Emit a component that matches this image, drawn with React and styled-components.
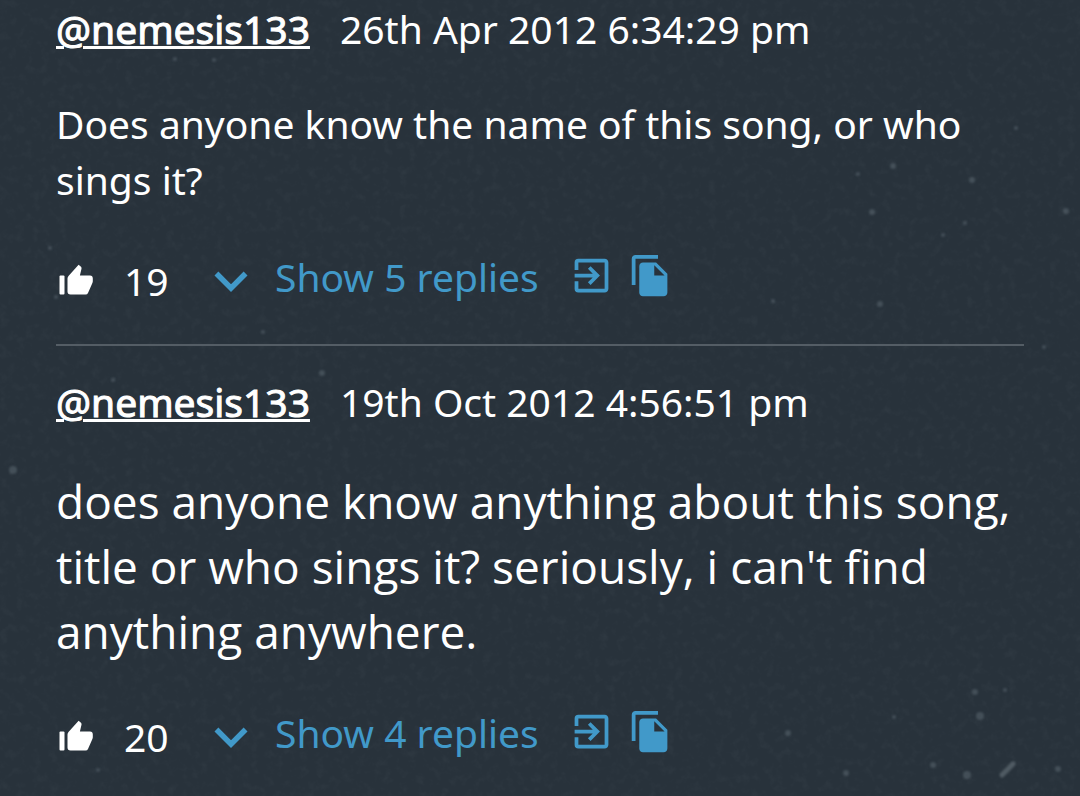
import React from 'react'
import styled, { createGlobalStyle } from 'styled-components'
import { MdExitToApp, MdExpandMore, MdFileCopy } from 'react-icons/md'

const GlobalStyle = createGlobalStyle`
  body {
    margin: 0;
    background-color: #28323b;
    color: #ffffff;
    font-family: 'Noto Sans', 'Open Sans', sans-serif;
    font-size: 39px;
  }
`

const Page = styled.main`
  position: relative;
  min-height: 100vh;
  box-sizing: border-box;
  overflow: hidden;
  padding: 1px 56px 0;
`

const Texture = styled.svg`
  position: absolute;
  inset: 0;
  width: 100%;
  height: 100%;
  z-index: -1;
`

const Comment = styled.article`
  & + & {
    border-top: 2px solid #545d65;
    padding-top: 28px;
  }
`

const Header = styled.header`
  display: flex;
  align-items: baseline;
  gap: 30px;
  line-height: 56px;
`

const Author = styled.a`
  color: inherit;
  -webkit-text-stroke: 1px currentColor;
  text-decoration: underline;
  text-decoration-thickness: 3px;
`

const Message = styled.p`
  margin: 39px 0 42px;
  font-family: ${props => (props.$large ? "'Open Sans', sans-serif" : 'inherit')};
  font-size: ${props => (props.$large ? 46 : 39)}px;
  line-height: ${props => (props.$large ? 65 : 56)}px;
`

const Actions = styled.footer`
  display: flex;
  align-items: flex-start;
  height: 94px;
`

const Button = styled.button`
  display: flex;
  align-items: center;
  padding: 0;
  border: 0;
  background: none;
  color: ${props => (props.$plain ? '#ffffff' : '#4199c9')};
  font: inherit;
  line-height: 56px;
  cursor: pointer;
`

const Likes = styled.span`
  width: 74px;
  margin-top: 3px;
  padding-left: 30px;
  line-height: 56px;
`

const LikeButton = styled(Button)`
  margin: 13px 0 0 2px;
`

const IconButton = styled(Button)`
  margin: 3px 0 0 14px;
`

const Replies = styled(Button)`
  height: 54px;
  margin-right: 16px;

  svg {
    margin: 8px 11px 0 0;
  }
`

const comments = [
  {
    author: '@nemesis133',
    date: '26th Apr 2012 6:34:29 pm',
    text: 'Does anyone know the name of this song, or who sings it?',
    likes: 19,
    replies: 5
  },
  {
    author: '@nemesis133',
    date: '19th Oct 2012 4:56:51 pm',
    text: "does anyone know anything about this song, title or who sings it? seriously, i can't find anything anywhere.",
    likes: 20,
    replies: 4,
    large: true
  }
]

// x, y, radius of the brighter dust marks
const specks = [
  [13, 470, 4], [788, 733, 3], [975, 692, 3], [980, 716, 4], [846, 773, 3],
  [894, 717, 2], [933, 765, 3], [967, 775, 4], [1058, 769, 3], [1005, 690, 2],
  [893, 166, 3], [972, 180, 3], [872, 212, 3], [1066, 211, 3], [943, 235, 2],
  [880, 304, 3], [773, 301, 2], [1044, 347, 2], [858, 174, 2], [965, 223, 2],
  [263, 332, 2], [113, 380, 2], [322, 373, 3], [175, 59, 2], [214, 60, 2],
  [56, 297, 2], [50, 248, 2], [1016, 128, 2], [98, 770, 2]
]

function DustTexture() {
  return (
    <Texture aria-hidden="true">
      <filter id="grain" x="0" y="0" width="100%" height="100%">
        <feTurbulence type="fractalNoise" baseFrequency="0.12" numOctaves="3" seed="8" />
        <feColorMatrix values="0 0 0 0 0.55  0 0 0 0 0.62  0 0 0 0 0.66  0.9 0.5 0 0 -0.66" />
      </filter>
      <filter id="soft">
        <feGaussianBlur stdDeviation="1" />
      </filter>
      <rect width="100%" height="100%" filter="url(#grain)" opacity="0.08" />
      <g fill="#6d7a83" opacity="0.4" filter="url(#soft)">
        {specks.map(([x, y, r]) => (
          <circle key={`${x}-${y}`} cx={x} cy={y} r={r} />
        ))}
        <path d="M1002 775l11-11" stroke="#8b979f" strokeWidth="5" strokeLinecap="round" />
      </g>
    </Texture>
  )
}

function ThumbIcon() {
  return (
    <svg width="36" height="36" viewBox="0 0 36 36" fill="currentColor" aria-hidden="true">
      <path d="M2.5 12.5h3q1 0 1 1v17q0 1-1 1h-3q-1 0-1-1v-17q0-1 1-1z" />
      <path d="M9.5 15.5q0-1.5 1-2.5L20.6 1.8l2.4 2q.8.8.5 2l-1.6 6.7H32q2.8.2 2.8 3v2.8q0 .8-.4 1.6l-4.4 10q-.7 1.6-2.4 1.6H12.5q-3 0-3-3z" />
    </svg>
  )
}

function CommentItem({ comment }) {
  return (
    <Comment>
      <Header>
        <Author href="#profile">{comment.author}</Author>
        <time>{comment.date}</time>
      </Header>
      <Message $large={comment.large}>{comment.text}</Message>
      <Actions>
        <LikeButton $plain aria-label="Like">
          <ThumbIcon />
        </LikeButton>
        <Likes>{comment.likes}</Likes>
        <Replies>
          <MdExpandMore size={66} />
          Show {comment.replies} replies
        </Replies>
        <IconButton aria-label="Open comment">
          <MdExitToApp size={45} />
        </IconButton>
        <IconButton aria-label="Copy comment">
          <MdFileCopy size={45} />
        </IconButton>
      </Actions>
    </Comment>
  )
}

export default function App() {
  return (
    <>
      <GlobalStyle />
      <Page>
        <DustTexture />
        {comments.map(comment => (
          <CommentItem key={comment.date} comment={comment} />
        ))}
      </Page>
    </>
  )
}
